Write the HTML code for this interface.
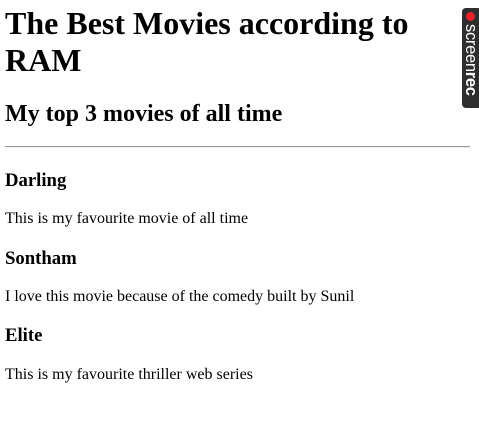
<!DOCTYPE html>
<html><head><meta charset="utf-8"><style>
html,body{margin:0;padding:0;background:#fff;width:479px;height:429px;overflow:hidden;position:relative;font-family:"Liberation Serif",serif;color:#000}
.a{position:absolute;left:5px;margin:0;white-space:nowrap}
h1{font-size:32px;line-height:37px;font-weight:bold}
h2{font-size:24px;line-height:28px;font-weight:bold}
h3{font-size:18.72px;line-height:22px;font-weight:bold}
p{font-size:16px;line-height:18px}
hr{position:absolute;left:5px;top:146px;width:465px;margin:0;border:0;border-top:1px solid #9a9a9a;border-bottom:1px solid #eee;height:0}
.badge{position:absolute;left:462px;top:8px;width:17px;height:100px;background:#2e2e2e;border-radius:4px 0 0 4px}
.dot{position:absolute;left:4px;top:4px;width:9px;height:9px;border-radius:50%;background:#e8212b}
.bt{position:absolute;left:18px;top:16px;transform-origin:0 0;transform:rotate(90deg);color:#fff;font-family:"Liberation Sans",sans-serif;font-size:16.5px;line-height:18px;white-space:nowrap;letter-spacing:-0.3px}
</style></head><body>
<h1 class="a" style="top:5px">The Best Movies according to<br>RAM</h1>
<h2 class="a" style="top:100px">My top 3 movies of all time</h2>
<hr>
<h3 class="a" style="top:170px">Darling</h3>
<p class="a" style="top:210px">This is my favourite movie of all time</p>
<h3 class="a" style="top:248px">Sontham</h3>
<p class="a" style="top:288px">I love this movie because of the comedy built by Sunil</p>
<h3 class="a" style="top:325px">Elite</h3>
<p class="a" style="top:366px">This is my favourite thriller web series</p>
<div class="badge"><div class="dot"></div><div class="bt">screen<b>rec</b></div></div>
</body></html>
